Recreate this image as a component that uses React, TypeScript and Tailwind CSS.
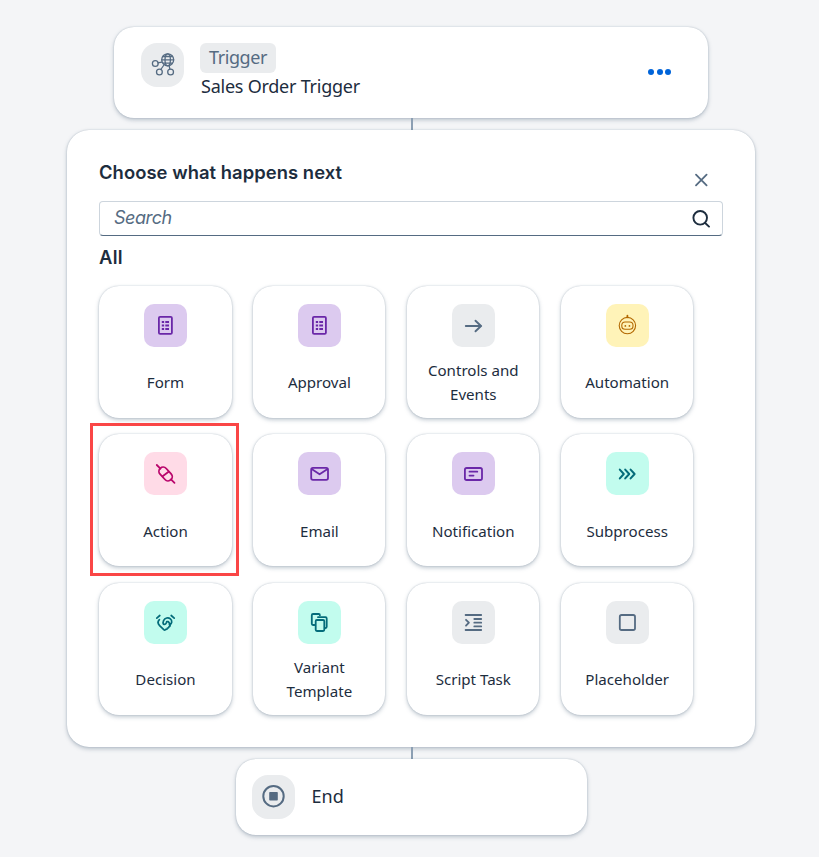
import type { ReactNode } from "react";

const shadow = "shadow-[0_0_1.5px_rgba(85,107,130,0.4),0_2px_4px_rgba(85,107,130,0.36)]";

function Glyph({ children, sw = 1.8 }: { children: ReactNode; sw?: number }) {
  return (
    <svg
      viewBox="0 0 43 43"
      className="h-[43px] w-[43px]"
      fill="none"
      stroke="currentColor"
      strokeWidth={sw}
      strokeLinecap="round"
      strokeLinejoin="round"
    >
      {children}
    </svg>
  );
}

const FormIcon = () => (
  <Glyph>
    <rect x="14.9" y="12.9" width="13" height="17" rx="1.2" />
    <path strokeLinecap="butt" d="M17.8 18h2.3M21.3 18H25M17.8 21.5h2.3M21.3 21.5H25M17.8 25h2.3M21.3 25H25" />
  </Glyph>
);
const ArrowIcon = () => (
  <Glyph sw={1.9}>
    <path d="M13.8 22h15.4M23.5 16.7 29 22l-5.5 5.3" />
  </Glyph>
);
const RobotIcon = () => (
  <Glyph sw={1.1}>
    <circle cx="21.4" cy="21.6" r="8.2" />
    <rect x="15.8" y="18" width="11.2" height="7.2" rx="3.3" />
    <path d="M21.4 11.7v1.6" strokeWidth="1.8" />
    <path d="M19.3 21.9h.1M23.4 21.9h.1" strokeWidth="1.7" />
  </Glyph>
);
const ActionIcon = () => (
  <Glyph sw={1.8}>
    <path d="m12.8 13 3.6 3.6M27 27.4l3.5 3.5" />
    <rect x="13.8" y="17.8" width="15.6" height="8.4" rx="4.2" transform="rotate(47 21.6 22)" />
    <path d="m18.6 24.2 6-4.4" />
  </Glyph>
);
const EmailIcon = () => (
  <Glyph sw={1.8}>
    <rect x="13.2" y="15.9" width="16.8" height="12" rx="1.8" />
    <path d="m14 17.3 7.6 5 7.6-5" />
  </Glyph>
);
const NotificationIcon = () => (
  <Glyph>
    <rect x="12.9" y="16" width="17.1" height="12" rx="1.8" />
    <path d="M17.5 19.7h7.8M17.5 23.6h4" />
  </Glyph>
);
const SubprocessIcon = () => (
  <Glyph sw={2}>
    <path d="m13.8 17.6 4 4.4-4 4.4M19.2 17.6l4 4.4-4 4.4M24.6 17.6l4 4.4-4 4.4" />
  </Glyph>
);
const DecisionIcon = () => (
  <Glyph sw={1.7}>
    <path d="m12.8 17.2 3-2.7M27.2 14.5l3 2.7" />
    <path d="M15.4 18.6c-1.8 1.8-1.6 4.2.2 6l4.2 4.1c.8.7 1.5.3 2-.4 1 .2 1.6-.4 1.6-1.2 1 0 1.7-.6 1.6-1.5 1.5-.2 1.3-1.5.4-2.3" />
    <path d="M19.5 23.2c-1.1-2 .2-5.5 3.2-6.2 2.8-.6 5.3 1.5 5 4.1-.1 1.3-.8 2.1-2 3.1M19.5 23.2c1.7.5 3-.5 3.2-2.5h1.7l1.4 2" />
  </Glyph>
);
const VariantIcon = () => (
  <Glyph>
    <path d="M16.4 24H15c-.8 0-1.2-.5-1.2-1.2v-8.6c0-.7.5-1.2 1.2-1.2h5.7c.7 0 1.2.5 1.2 1.2" />
    <path d="M20 16.2h7.5c.7 0 1.2.5 1.2 1.2v8.4c0 .7-.4 1.2-1.1 1.2" />
    <rect x="17.7" y="19" width="8.6" height="11" rx="1.2" />
  </Glyph>
);
const ScriptIcon = () => (
  <Glyph>
    <path d="M13.6 14h15.6M13.6 29h15.6M22.3 18h6.9M22.3 21.7h6.9M22.3 25.4h6.9M14 18.8l2.9 2.9-2.9 3" />
  </Glyph>
);
const PlaceholderIcon = () => (
  <Glyph sw={1.8}>
    <rect x="13.8" y="14" width="15.2" height="15" rx="1.8" />
  </Glyph>
);

const purple = "bg-[#dccaef] text-[#6a27a8]";
const gray = "bg-[#eaecee] text-[#556b82]";
const teal = "bg-[#c2fcee] text-[#046c7a]";

const items: { label: string; tone: string; icon: ReactNode; marked?: boolean }[] = [
  { label: "Form", tone: purple, icon: <FormIcon /> },
  { label: "Approval", tone: purple, icon: <FormIcon /> },
  { label: "Controls and Events", tone: gray, icon: <ArrowIcon /> },
  { label: "Automation", tone: "bg-[#fff3b8] text-[#b36800]", icon: <RobotIcon /> },
  { label: "Action", tone: "bg-[#ffdbe7] text-[#ba066c]", icon: <ActionIcon />, marked: true },
  { label: "Email", tone: purple, icon: <EmailIcon /> },
  { label: "Notification", tone: purple, icon: <NotificationIcon /> },
  { label: "Subprocess", tone: teal, icon: <SubprocessIcon /> },
  { label: "Decision", tone: teal, icon: <DecisionIcon /> },
  { label: "Variant Template", tone: teal, icon: <VariantIcon /> },
  { label: "Script Task", tone: gray, icon: <ScriptIcon /> },
  { label: "Placeholder", tone: gray, icon: <PlaceholderIcon /> },
];

export default function App() {
  return (
    <div className="flex h-[857px] w-[819px] flex-col items-center overflow-hidden bg-[#f4f5f7] pt-[27px] font-['Noto_Sans',sans-serif] text-[#1d2d3e]">
      <div className="ml-[3px] flex w-[689px] flex-col items-center">
        <section className={`flex h-[91px] w-[594px] shrink-0 rounded-[20px] bg-white pl-[27px] pr-[37px] pt-4 ${shadow}`}>
          <div className="h-11 w-[43px] rounded-2xl bg-[#eaecee] text-[#556b82]">
            <Glyph sw={1.3}>
              <circle cx="26.7" cy="16.8" r="6" />
              <ellipse cx="26.7" cy="16.8" rx="2.7" ry="6" />
              <path d="M20.8 16.8h11.8M22 13.5h9.4M22 20.1h9.4M16.8 19.8l4-.7M19.8 26.5l2.8-4M28.9 26.2l-.8-3.6" />
              <circle cx="14.3" cy="20.5" r="2.9" />
              <circle cx="18.4" cy="29" r="2.9" />
              <circle cx="29.6" cy="29" r="2.9" />
            </Glyph>
          </div>
          <div className="ml-4 flex flex-col items-start">
            <span className="flex h-[30px] w-[76px] items-center justify-center rounded-md bg-[#eaecee] pb-0.5 text-[18px] tracking-[-0.45px] text-[#556b82]">
              Trigger
            </span>
            <span className="ml-px whitespace-nowrap text-[18px] leading-[27px] tracking-[-0.24px]">Sales Order Trigger</span>
          </div>
          <div className="ml-auto mt-[26px] flex h-1.5 gap-[2.3px]">
            <i className="h-1.5 w-1.5 rounded-full bg-[#0064d9]" />
            <i className="h-1.5 w-1.5 rounded-full bg-[#0064d9]" />
            <i className="h-1.5 w-1.5 rounded-full bg-[#0064d9]" />
          </div>
        </section>

        <div className="ml-0.5 h-3 w-[1.5px] shrink-0 bg-[#8c9fb3]" />

        <section className={`flex h-[617px] w-[688px] shrink-0 flex-col rounded-[22px] bg-white px-8 pt-7 ${shadow}`}>
          <div className="flex h-[43px] justify-between">
            <h1 className="font-[Inter,sans-serif] text-[18.4px] font-semibold leading-[28px] tracking-[0.05px]">Choose what happens next</h1>
            <svg viewBox="0 0 14 14" className="mr-[15px] mt-[15px] h-[14px] w-[14px] text-[#556b82]" stroke="currentColor" strokeWidth="1.8" strokeLinecap="round">
              <path d="m2 1.7 10.6 10.6M12.6 1.7 2 12.3" />
            </svg>
          </div>
          <div className="flex h-[35px] w-[624px] items-center justify-between rounded border border-[#cdd5dd] border-b-[#556b82] pl-[14px] pr-3 text-[#556b82]">
            <span className="pb-0.5 font-[Inter,sans-serif] text-[18px] italic tracking-[-0.45px]">Search</span>
            <svg viewBox="0 0 18 18" className="h-[18px] w-[18px] text-[#1d2d3e]" fill="none" stroke="currentColor" strokeWidth="1.9" strokeLinecap="round">
              <circle cx="8.2" cy="7.8" r="6.8" />
              <path d="m13.2 13 3.8 3.6" />
            </svg>
          </div>
          <h2 className="mt-2 h-[26px] font-[Inter,sans-serif] text-[18.4px] font-semibold leading-[27px] tracking-[0.3px]">All</h2>
          <div className="mt-4 grid grid-cols-[repeat(4,132.5px)] gap-x-[21.4px] gap-y-[16.4px]">
            {items.map((item) => (
              <div key={item.label} className={`relative flex h-[132px] flex-col items-center rounded-[20px] bg-white pl-[0.5px] pt-[18px] ${shadow}`}>
                {item.marked && <div className="absolute -left-[9px] -top-[11px] h-[153px] w-[149px] border-[3px] border-[#fa4646]" />}
                <div className={`h-[43px] w-[43px] rounded-[10px] ${item.tone}`}>{item.icon}</div>
                <div className="mt-[11.2px] flex h-12 w-[105px] items-center justify-center text-center text-[15.1px] leading-6">
                  {item.label}
                </div>
              </div>
            ))}
          </div>
        </section>

        <div className="ml-0.5 h-3 w-[1.5px] shrink-0 bg-[#8c9fb3]" />

        <section className={`flex h-[76px] w-[351px] shrink-0 items-center rounded-[20px] bg-white pl-4 ${shadow}`}>
          <div className="h-11 w-[43px] rounded-2xl bg-[#eaecee] text-[#556b82]">
            <Glyph sw={2}>
              <circle cx="21.5" cy="21.2" r="10.2" />
              <rect x="17.2" y="17" width="8.6" height="8.6" rx="0.8" fill="currentColor" stroke="none" />
            </Glyph>
          </div>
          <span className="ml-[17px] pb-0.5 text-[18px]">End</span>
        </section>
      </div>
    </div>
  );
}
